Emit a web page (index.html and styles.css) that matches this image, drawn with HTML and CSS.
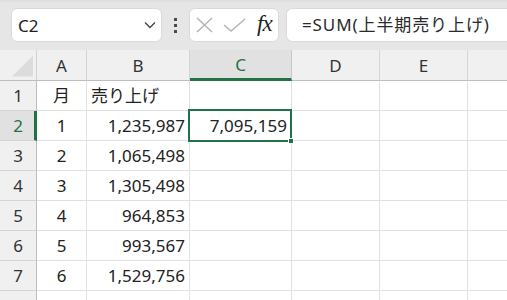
FILE: index.html
```html
<!DOCTYPE html>
<html lang="ja">
<head>
<meta charset="utf-8">
<link rel="stylesheet" href="styles.css">
</head>
<body>
<div class="toolbar">
  <div class="namebox">
    <span class="nb-text">C2</span>
    <svg class="chev" width="12" height="8" viewBox="0 0 12 8"><polyline points="1,1.5 6,6.5 11,1.5" fill="none" stroke="#444" stroke-width="1.3"/></svg>
  </div>
  <div class="grip"><i></i><i></i><i></i></div>
  <div class="fbuttons">
    <svg class="ico-x" width="17" height="16" viewBox="0 0 17 16"><path d="M1 1 L16 15 M16 1 L1 15" stroke="#b3b3b3" stroke-width="1.4" fill="none"/></svg>
    <svg class="ico-ok" width="23" height="14" viewBox="0 0 23 14"><polyline points="1,7 8,13 22,1" fill="none" stroke="#b3b3b3" stroke-width="1.4"/></svg>
    <span class="fx">fx</span>
  </div>
  <div class="finput">=SUM(上半期売り上げ)</div>
</div>
<div class="sheet">
  <div class="corner"><svg width="22" height="22" viewBox="0 0 22 22"><polygon points="22,0 22,22 0,22" fill="#dcdcdc"/></svg></div>
  <div class="ch">A</div>
  <div class="ch">B</div>
  <div class="ch sel">C</div>
  <div class="ch">D</div>
  <div class="ch">E</div>
  <div class="ch last"></div>

  <div class="rh">1</div>
  <div class="c ctr">月</div>
  <div class="c">売り上げ</div>
  <div class="c"></div><div class="c"></div><div class="c"></div><div class="c last"></div>

  <div class="rh sel">2</div>
  <div class="c ctr">1</div>
  <div class="c num">1,235,987</div>
  <div class="c num active">7,095,159</div>
  <div class="c"></div><div class="c"></div><div class="c last"></div>

  <div class="rh">3</div>
  <div class="c ctr">2</div>
  <div class="c num">1,065,498</div>
  <div class="c"></div><div class="c"></div><div class="c"></div><div class="c last"></div>

  <div class="rh">4</div>
  <div class="c ctr">3</div>
  <div class="c num">1,305,498</div>
  <div class="c"></div><div class="c"></div><div class="c"></div><div class="c last"></div>

  <div class="rh">5</div>
  <div class="c ctr">4</div>
  <div class="c num">964,853</div>
  <div class="c"></div><div class="c"></div><div class="c"></div><div class="c last"></div>

  <div class="rh">6</div>
  <div class="c ctr">5</div>
  <div class="c num">993,567</div>
  <div class="c"></div><div class="c"></div><div class="c"></div><div class="c last"></div>

  <div class="rh">7</div>
  <div class="c ctr">6</div>
  <div class="c num">1,529,756</div>
  <div class="c"></div><div class="c"></div><div class="c"></div><div class="c last"></div>

  <div class="rh rh-cut"></div>
  <div class="c ctr"></div>
  <div class="c"></div>
  <div class="c"></div><div class="c"></div><div class="c"></div><div class="c last"></div>
</div>
</body>
</html>
```
FILE: styles.css
```css
html, body {
  margin: 0;
  padding: 0;
  width: 507px;
  height: 300px;
  overflow: hidden;
  background: #fff;
  font-family: "Noto Sans", "Noto Sans CJK JP", sans-serif;
  color: #222;
}

.toolbar {
  height: 50px;
  box-sizing: border-box;
  background: #e6e6e6;
  border-top: 2px solid #dedede;
  padding: 6px 0 0 11px;
  display: flex;
  align-items: flex-start;
}

.namebox {
  width: 151px;
  height: 34px;
  box-sizing: border-box;
  background: #fff;
  border-radius: 6px;
  border: 1px solid #dadada;
  display: flex;
  align-items: center;
  justify-content: space-between;
  padding: 0 5px 0 6px;
  font-size: 17px;
  color: #222;
}

.nb-text {
  line-height: 1;
}

.grip {
  width: 27px;
  height: 34px;
  display: flex;
  flex-direction: column;
  align-items: center;
  justify-content: center;
  gap: 3px;
}

.grip i {
  display: block;
  width: 3px;
  height: 3px;
  background: #4a4a4a;
}

.fbuttons {
  width: 90px;
  height: 34px;
  box-sizing: border-box;
  background: #fff;
  border-radius: 6px;
  border: 1px solid #dadada;
  display: flex;
  align-items: center;
  padding-left: 6px;
}

.ico-x {
  margin-right: 10px;
}

.ico-ok {
  margin-right: 10px;
}

.fx {
  font-family: "Liberation Serif", "DejaVu Serif", serif;
  font-style: italic;
  font-size: 23px;
  color: #1e1e1e;
  letter-spacing: -1px;
  line-height: 1;
  margin-top: -3px;
  margin-left: 1px;
}

.finput {
  flex: 1;
  margin-left: 7px;
  height: 34px;
  box-sizing: border-box;
  background: #fff;
  border: 1px solid #dadada;
  border-right: none;
  border-radius: 6px 0 0 6px;
  padding-left: 15px;
  font-size: 17px;
  line-height: 32px;
  color: #2a2a2a;
  white-space: nowrap;
  letter-spacing: 0.9px;
}

.sheet {
  display: grid;
  grid-template-columns: 37px 50px 103px 102px 88px 88px 1fr;
  grid-template-rows: 31px repeat(7, 30px) 10px;
  font-size: 17px;
}

.sheet > div {
  box-sizing: border-box;
  display: flex;
  align-items: center;
  line-height: 1;
  white-space: nowrap;
}

.corner {
  background: #f0f0f0;
  border-right: 1px solid #d2d2d2;
  border-bottom: 1px solid #bdbdbd;
  padding: 3px 3px 2px 12px;
  justify-content: flex-start;
}

.ch {
  background: #f0f0f0;
  border-right: 1px solid #d4d4d4;
  border-bottom: 1px solid #bdbdbd;
  justify-content: center;
  color: #333;
}

.ch.sel {
  background: #e1e1e1;
  color: #217346;
  border-bottom: 3px solid #217346;
  border-right-color: #c8c8c8;
}

.ch.last, .c.last {
  border-right: none;
}

.rh {
  background: #f0f0f0;
  border-right: 1px solid #bdbdbd;
  border-bottom: 1px solid #d4d4d4;
  justify-content: center;
  color: #333;
}

.rh.sel {
  background: #e1e1e1;
  color: #217346;
  border-right: 3px solid #217346;
  padding-left: 2px;
}

.c {
  border-right: 1px solid #e1e1e1;
  border-bottom: 1px solid #e1e1e1;
  padding: 0 4px;
}

.c.ctr {
  justify-content: center;
}

.c.num {
  justify-content: flex-end;
  padding-right: 4px;
}

.c.active {
  position: relative;
}

.c.active::after {
  content: "";
  position: absolute;
  left: -2px;
  top: -2px;
  right: -1px;
  bottom: -2px;
  border: 2px solid #217346;
}

.c.active::before {
  content: "";
  position: absolute;
  right: -3px;
  bottom: -4px;
  width: 6px;
  height: 6px;
  background: #217346;
  border: 1px solid #fff;
  box-sizing: border-box;
  z-index: 2;
}
```
